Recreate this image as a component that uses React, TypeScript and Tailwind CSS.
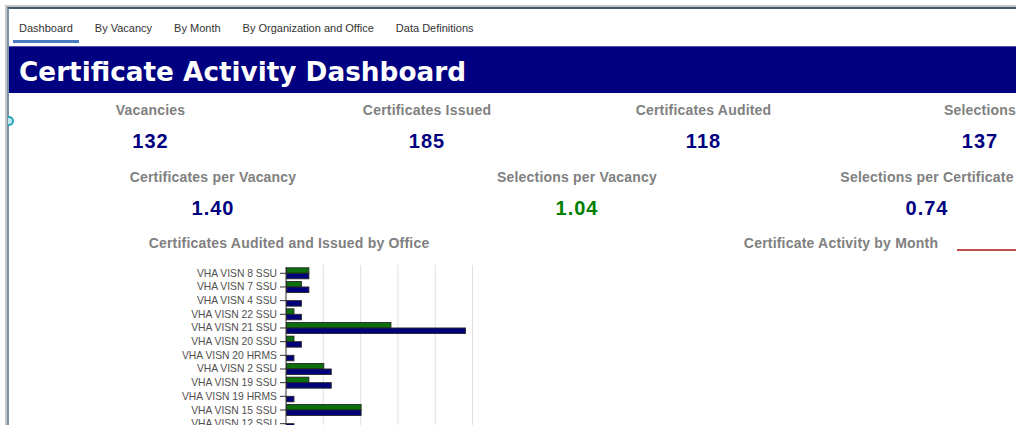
const tabs = [
  "Dashboard",
  "By Vacancy",
  "By Month",
  "By Organization and Office",
  "Data Definitions",
];

const topStats = [
  { label: "Vacancies", value: "132" },
  { label: "Certificates Issued", value: "185" },
  { label: "Certificates Audited", value: "118" },
  { label: "Selections", value: "137" },
];

const ratioStats = [
  { label: "Certificates per Vacancy", value: "1.40", green: false },
  { label: "Selections per Vacancy", value: "1.04", green: true },
  { label: "Selections per Certificate", value: "0.74", green: false },
];

const offices = [
  { name: "VHA VISN 8 SSU", audited: 3, issued: 3 },
  { name: "VHA VISN 7 SSU", audited: 2, issued: 3 },
  { name: "VHA VISN 4 SSU", audited: 0, issued: 2 },
  { name: "VHA VISN 22 SSU", audited: 1, issued: 2 },
  { name: "VHA VISN 21 SSU", audited: 14, issued: 24 },
  { name: "VHA VISN 20 SSU", audited: 1, issued: 2 },
  { name: "VHA VISN 20 HRMS", audited: 0, issued: 1 },
  { name: "VHA VISN 2 SSU", audited: 5, issued: 6 },
  { name: "VHA VISN 19 SSU", audited: 3, issued: 6 },
  { name: "VHA VISN 19 HRMS", audited: 0, issued: 1 },
  { name: "VHA VISN 15 SSU", audited: 10, issued: 10 },
  { name: "VHA VISN 12 SSU", audited: 0, issued: 1 },
];

// horizontal bar chart geometry
const AXIS_X = 274;
const UNIT = 7.46;
const ROW_H = 13.67;
const FIRST_ROW = 20.3;
const BAR_H = 5.5;

const OfficeChart = () => (
  <svg width={554} height={172} className="block">
    {[1, 2, 3, 4, 5].map((i) => (
      <line
        key={i}
        x1={AXIS_X + i * 37.3}
        x2={AXIS_X + i * 37.3}
        y1={12}
        y2={172}
        stroke="#e0e0e0"
        strokeWidth={1}
      />
    ))}
    <line x1={AXIS_X} x2={AXIS_X} y1={14} y2={172} stroke="#333" strokeWidth={1} />
    {offices.map((o, i) => {
      const cy = FIRST_ROW + i * ROW_H;
      return (
        <g key={o.name}>
          <line x1={AXIS_X - 6} x2={AXIS_X} y1={cy} y2={cy} stroke="#333" strokeWidth={1} />
          <text
            x={AXIS_X - 9}
            y={cy}
            textAnchor="end"
            dominantBaseline="central"
            fontSize={10.3}
            fill="#505050"
            fontFamily="'Liberation Sans', Arial, sans-serif"
          >
            {o.name}
          </text>
          {o.audited > 0 && (
            <rect
              x={AXIS_X + 0.5}
              y={cy - BAR_H}
              width={o.audited * UNIT}
              height={BAR_H}
              fill="#0b6f0b"
              stroke="#262626"
              strokeWidth={0.9}
            />
          )}
          {o.issued > 0 && (
            <rect
              x={AXIS_X + 0.5}
              y={cy}
              width={o.issued * UNIT}
              height={BAR_H}
              fill="#00007a"
              stroke="#262626"
              strokeWidth={0.9}
            />
          )}
        </g>
      );
    })}
  </svg>
);

const MonthChart = () => (
  <svg width={550} height={172} className="col-start-1 row-start-1 block">
    <line x1={391} x2={460} y1={17} y2={17} stroke="#c0504d" strokeWidth={2} />
  </svg>
);

const labelCls =
  "h-[20px] whitespace-nowrap text-[14px] leading-[20px] font-bold tracking-[0.2px] text-[#808080]";
const valueCls =
  "mt-[8px] h-[26px] text-[20px] leading-[26px] font-bold tracking-[1px]";

export default function App() {
  return (
    <div className="h-[425px] w-[1016px] overflow-hidden bg-white font-['Liberation_Sans',Arial,sans-serif]">
      <div className="ml-[5px] mt-[5px] h-full border-l-2 border-t-2 border-[#c6c6c6]">
        <div className="relative h-full border-l-2 border-t-2 border-t-[#41596a] border-l-[#7a93ad]">
          {/* splitter handle */}
          <div className="absolute -left-[1px] top-[107px] h-[10px] w-[6px] rounded-r-full border-[2.5px] border-l-0 border-[#26a8ba] bg-[#bfe8ee]" />

          {/* Tabs */}
          <div className="flex gap-[10px] pl-[4px] pt-[12px] pb-[3px]">
            {tabs.map((t, i) => (
              <div key={t} className="flex flex-col">
                <span className="h-[14px] px-[6px] text-[11px] leading-[14px] text-[#333] whitespace-nowrap">
                  {t}
                </span>
                <div
                  className={
                    i === 0
                      ? "mt-[5px] h-[3px] bg-[#4a7cc2]"
                      : "mt-[5px] h-[3px]"
                  }
                />
              </div>
            ))}
          </div>

          {/* Banner */}
          <div className="h-[47px] border-t border-t-[#5151ad] bg-[#000080] pl-[10px] pt-[12px]">
            <h1 className="whitespace-nowrap font-['DejaVu_Sans',sans-serif] text-[26.3px] leading-[26px] font-bold text-white">
              Certificate Activity Dashboard
            </h1>
          </div>

          {/* Totals */}
          <div className="grid w-max grid-cols-[277px_276px_277px_276px] pl-[3px] pt-[7px]">
            {topStats.map((s) => (
              <div key={s.label} className="flex flex-col items-center">
                <div className={labelCls}>{s.label}</div>
                <div className={valueCls + " text-[#000080]"}>{s.value}</div>
              </div>
            ))}
          </div>

          {/* Ratios */}
          <div className="mt-[13px] grid w-max grid-cols-[364px_364px_336px] pl-[22px]">
            {ratioStats.map((s) => (
              <div key={s.label} className="flex flex-col items-center">
                <div className={labelCls}>{s.label}</div>
                <div
                  className={
                    s.green
                      ? valueCls + " text-[#008000]"
                      : valueCls + " text-[#000080]"
                  }
                >
                  {s.value}
                </div>
              </div>
            ))}
          </div>

          {/* Charts */}
          <div className="mt-[12px] grid w-max grid-cols-[554px_550px] items-start pl-[3px]">
            <div className="flex flex-col">
              <div className={labelCls + " text-center"}>
                Certificates Audited and Issued by Office
              </div>
              <OfficeChart />
            </div>
            <div className="grid">
              <div className={labelCls + " col-start-1 row-start-1 text-center"}>
                Certificate Activity by Month
              </div>
              <MonthChart />
            </div>
          </div>
        </div>
      </div>
    </div>
  );
}
